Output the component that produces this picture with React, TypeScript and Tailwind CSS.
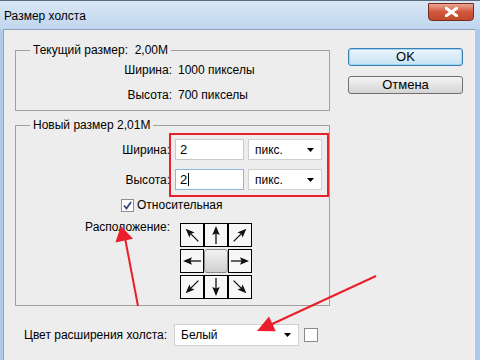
import React from "react";

// маленькие стрелки в сетке "Расположение"
const CellArrow = ({ angle }: { angle: number }) => (
  <svg width="22" height="22" viewBox="0 0 22 22">
    <g transform={`rotate(${angle} 11 11)`}>
      <line x1="2" y1="11" x2="13" y2="11" stroke="#111" strokeWidth="1.3" />
      <path d="M20 11 L11 7.3 L12.6 11 L11 14.7 Z" fill="#111" />
    </g>
  </svg>
);

const UnitSelect = ({ w, label }: { w: string; label: string }) => (
  <div
    className={`${w} h-[21px] bg-white border border-[#d0d0d0] flex items-center justify-between pl-[6px] pr-[7px]`}
  >
    <span>{label}</span>
    <svg width="7" height="4" viewBox="0 0 7 4">
      <path d="M0 0 H7 L3.5 4 Z" fill="#000" />
    </svg>
  </div>
);

const App = () => {
  const arrows: (number | null)[] = [225, 270, 315, 180, null, 0, 135, 90, 45];

  return (
    <div className="w-[480px] h-[360px] relative overflow-hidden flex flex-col bg-[#b6cfea] text-[12px] leading-[14px] text-black font-['Liberation_Sans','DejaVu_Sans',sans-serif]">
      {/* заголовок окна */}
      <div className="h-[29px] flex items-start justify-between border-t border-[#5d6b7c] bg-gradient-to-b from-[#d8e7f6] to-[#c0d6ee]">
        <span className="ml-[4px] mt-[8px] text-[12px]">Размер холста</span>
        <div className="mt-[2px] mr-[6px] w-[46px] h-[18px] rounded-b-[4px] border border-[#7a2a1c] bg-gradient-to-b from-[#e9a795] via-[#d0563c] to-[#c04a2e] flex items-center justify-center">
          <svg width="13" height="10" viewBox="0 0 13 10">
            <path
              d="M1 1 L12 9 M12 1 L1 9"
              stroke="#fff"
              strokeWidth="3"
              strokeLinecap="square"
            />
          </svg>
        </div>
      </div>

      <div className="flex flex-1">
        <div className="w-[3px] bg-[#b1cbe8]" />
        <div className="w-[472px] bg-[#ededed] border-l border-t border-[#8ea3bd] border-r-[#4f5c6b] flex pl-[11px]">
          <div className="w-[315px] flex flex-col">
            {/* Текущий размер */}
            <div className="mt-[20px] h-[61px] border border-[#a0a0a0]">
              <div className="-mt-[8px] ml-[14px] px-[3px] w-fit bg-[#ededed]">
                Текущий размер:&nbsp; 2,00M
              </div>
              <div className="grid grid-cols-[156px_auto] gap-x-[6px] mt-[5px] leading-[16px]">
                <span className="text-right">Ширина:</span>
                <span>1000 пикселы</span>
              </div>
              <div className="grid grid-cols-[156px_auto] gap-x-[6px] mt-[9px] leading-[16px]">
                <span className="text-right">Высота:</span>
                <span>700 пикселы</span>
              </div>
            </div>

            {/* Новый размер */}
            <div className="relative mt-[14px] h-[181px] border border-[#a0a0a0]">
              <div className="-mt-[8px] ml-[14px] px-[3px] w-fit bg-[#ededed]">
                Новый размер 2,01M
              </div>
              <div className="flex items-center mt-[7px]">
                <span className="w-[154px] text-right">Ширина:</span>
                <div className="ml-[5px] w-[69px] h-[21px] bg-white border border-[#c9c9c9] pl-[4px] flex items-center text-[13px]">
                  2
                </div>
                <div className="ml-[4px]">
                  <UnitSelect w="w-[74px]" label="пикс." />
                </div>
              </div>
              <div className="flex items-center mt-[9px]">
                <span className="w-[154px] text-right">Высота:</span>
                <div className="ml-[5px] w-[69px] h-[21px] bg-white border border-[#8fb5dd] pl-[4px] flex items-center text-[13px]">
                  2<span className="ml-[1px] w-px h-[13px] bg-black" />
                </div>
                <div className="ml-[4px]">
                  <UnitSelect w="w-[74px]" label="пикс." />
                </div>
              </div>
              <div className="flex items-center mt-[8px] ml-[105px]">
                <div className="w-[13px] h-[13px] bg-white border border-[#8e8f8f] flex items-center justify-center">
                  <svg width="9" height="9" viewBox="0 0 9 9">
                    <path
                      d="M1 4.5 L3.5 7.5 L8 1"
                      stroke="#35477a"
                      strokeWidth="1.8"
                      fill="none"
                    />
                  </svg>
                </div>
                <span className="ml-[3px]">Относительная</span>
              </div>
              <div className="flex items-start mt-[11px]">
                <span className="w-[154px] text-right -mt-[3px]">Расположение:</span>
                <div className="ml-[10px] grid grid-cols-[24px_24px_24px] gap-y-[2px]">
                  {arrows.map((a, i) =>
                    a === null ? (
                      <div
                        key={i}
                        className="w-[24px] h-[24px] rounded-[3px] border border-[#8a8a8a] bg-gradient-to-b from-[#f3f3f3] to-[#cfcfcf]"
                      />
                    ) : (
                      <div
                        key={i}
                        className="w-[24px] h-[24px] border border-black bg-[#f7f7f7]"
                      >
                        <CellArrow angle={a} />
                      </div>
                    )
                  )}
                </div>
              </div>
              {/* красная рамка вокруг полей */}
              <div className="absolute left-[153px] top-[7px] w-[160px] h-[64px] border-2 border-[#e8202a] pointer-events-none" />
            </div>

            {/* Цвет расширения */}
            <div className="flex items-center mt-[18px] ml-[9px]">
              <span className="w-[146px]">Цвет расширения холста:</span>
              <div className="ml-[4px]">
                <div className="w-[125px] h-[22px] bg-white border border-[#d0d0d0] flex items-center justify-between pl-[6px] pr-[7px]">
                  <span>Белый</span>
                  <svg width="7" height="4" viewBox="0 0 7 4">
                    <path d="M0 0 H7 L3.5 4 Z" fill="#000" />
                  </svg>
                </div>
              </div>
              <div className="ml-[5px] w-[14px] h-[14px] bg-white border border-[#8a8a8a]" />
            </div>
          </div>

          {/* кнопки */}
          <div className="ml-[18px] mt-[18px] flex flex-col gap-[10px]">
            <button className="w-[115px] h-[18px] rounded-[3px] border border-[#3c7fb1] bg-gradient-to-b from-[#eaf5fc] to-[#c6e3f5] shadow-[inset_0_0_0_1px_#9fd5f3] text-[13px] leading-[14px]">
              OK
            </button>
            <button className="w-[115px] h-[18px] rounded-[3px] border border-[#707070] bg-gradient-to-b from-[#f4f4f4] to-[#d4d4d4] text-[13px] leading-[14px]">
              Отмена
            </button>
          </div>
        </div>
        <div className="w-[5px] bg-[#aecaea]" />
      </div>

      {/* красные стрелки-пометки */}
      <svg
        className="absolute left-0 top-0 pointer-events-none"
        width="480"
        height="360"
        viewBox="0 0 480 360"
      >
        <line x1="138" y1="306" x2="125" y2="238" stroke="#ea1f2b" strokeWidth="2" />
        <path d="M121 226 L133 238.8 L115.4 242.6 Z" fill="#ea1f2b" />
        <line x1="376" y1="276" x2="270" y2="325" stroke="#ea1f2b" strokeWidth="2" />
        <path d="M257 331 L275.8 331.2 L269 316.6 Z" fill="#ea1f2b" />
      </svg>
    </div>
  );
};

export default App;
